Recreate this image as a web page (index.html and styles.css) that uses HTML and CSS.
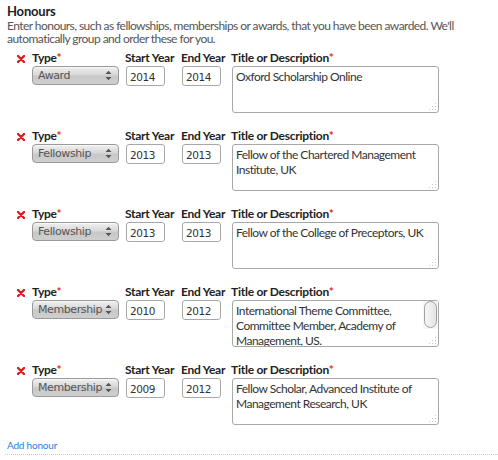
FILE: index.html
```html
<!DOCTYPE html>
<html>
<head>
<meta charset="utf-8">
<link rel="stylesheet" href="styles.css">
</head>
<body>
<div class="section">
  <h2 class="title">Honours</h2>
  <p class="intro">Enter honours, such as fellowships, memberships or awards, that you have been awarded. We'll automatically group and order these for you.</p>

  <div class="rows">
    <div class="row">
      <span class="remove"><svg width="8" height="8" viewBox="0 0 8 8"><path d="M1 1 L7 7 M7 1 L1 7" stroke="#e01b1b" stroke-width="2.4" stroke-linecap="round"/></svg></span>
      <div class="col col-type">
        <label class="lbl">Type<span class="req">*</span></label>
        <div class="select"><span class="sel-text">Award</span><svg class="arrows" width="7" height="11" viewBox="0 0 7 11"><path d="M0.5 4 L3.5 0.8 L6.5 4 Z M0.5 7 L3.5 10.2 L6.5 7 Z" fill="#555"/></svg></div>
      </div>
      <div class="col col-start">
        <label class="lbl">Start Year</label>
        <input class="year" type="text" value="2014">
      </div>
      <div class="col col-end">
        <label class="lbl">End Year</label>
        <input class="year" type="text" value="2014">
      </div>
      <div class="col col-title">
        <label class="lbl">Title or Description<span class="req">*</span></label>
        <div class="ta-wrap"><textarea class="desc">Oxford Scholarship Online</textarea><svg class="grip" width="9" height="9" viewBox="0 0 9 9"><g fill="#c8c8c8"><rect x="7" y="1" width="1" height="1"/><rect x="4" y="4" width="1" height="1"/><rect x="7" y="4" width="1" height="1"/><rect x="1" y="7" width="1" height="1"/><rect x="4" y="7" width="1" height="1"/><rect x="7" y="7" width="1" height="1"/></g></svg></div>
      </div>
    </div>

    <div class="row">
      <span class="remove"><svg width="8" height="8" viewBox="0 0 8 8"><path d="M1 1 L7 7 M7 1 L1 7" stroke="#e01b1b" stroke-width="2.4" stroke-linecap="round"/></svg></span>
      <div class="col col-type">
        <label class="lbl">Type<span class="req">*</span></label>
        <div class="select"><span class="sel-text">Fellowship</span><svg class="arrows" width="7" height="11" viewBox="0 0 7 11"><path d="M0.5 4 L3.5 0.8 L6.5 4 Z M0.5 7 L3.5 10.2 L6.5 7 Z" fill="#555"/></svg></div>
      </div>
      <div class="col col-start">
        <label class="lbl">Start Year</label>
        <input class="year" type="text" value="2013">
      </div>
      <div class="col col-end">
        <label class="lbl">End Year</label>
        <input class="year" type="text" value="2013">
      </div>
      <div class="col col-title">
        <label class="lbl">Title or Description<span class="req">*</span></label>
        <div class="ta-wrap"><textarea class="desc">Fellow of the Chartered Management Institute, UK</textarea><svg class="grip" width="9" height="9" viewBox="0 0 9 9"><g fill="#c8c8c8"><rect x="7" y="1" width="1" height="1"/><rect x="4" y="4" width="1" height="1"/><rect x="7" y="4" width="1" height="1"/><rect x="1" y="7" width="1" height="1"/><rect x="4" y="7" width="1" height="1"/><rect x="7" y="7" width="1" height="1"/></g></svg></div>
      </div>
    </div>

    <div class="row">
      <span class="remove"><svg width="8" height="8" viewBox="0 0 8 8"><path d="M1 1 L7 7 M7 1 L1 7" stroke="#e01b1b" stroke-width="2.4" stroke-linecap="round"/></svg></span>
      <div class="col col-type">
        <label class="lbl">Type<span class="req">*</span></label>
        <div class="select"><span class="sel-text">Fellowship</span><svg class="arrows" width="7" height="11" viewBox="0 0 7 11"><path d="M0.5 4 L3.5 0.8 L6.5 4 Z M0.5 7 L3.5 10.2 L6.5 7 Z" fill="#555"/></svg></div>
      </div>
      <div class="col col-start">
        <label class="lbl">Start Year</label>
        <input class="year" type="text" value="2013">
      </div>
      <div class="col col-end">
        <label class="lbl">End Year</label>
        <input class="year" type="text" value="2013">
      </div>
      <div class="col col-title">
        <label class="lbl">Title or Description<span class="req">*</span></label>
        <div class="ta-wrap"><textarea class="desc">Fellow of the College of Preceptors, UK</textarea><svg class="grip" width="9" height="9" viewBox="0 0 9 9"><g fill="#c8c8c8"><rect x="7" y="1" width="1" height="1"/><rect x="4" y="4" width="1" height="1"/><rect x="7" y="4" width="1" height="1"/><rect x="1" y="7" width="1" height="1"/><rect x="4" y="7" width="1" height="1"/><rect x="7" y="7" width="1" height="1"/></g></svg></div>
      </div>
    </div>

    <div class="row">
      <span class="remove"><svg width="8" height="8" viewBox="0 0 8 8"><path d="M1 1 L7 7 M7 1 L1 7" stroke="#e01b1b" stroke-width="2.4" stroke-linecap="round"/></svg></span>
      <div class="col col-type">
        <label class="lbl">Type<span class="req">*</span></label>
        <div class="select"><span class="sel-text">Membership</span><svg class="arrows" width="7" height="11" viewBox="0 0 7 11"><path d="M0.5 4 L3.5 0.8 L6.5 4 Z M0.5 7 L3.5 10.2 L6.5 7 Z" fill="#555"/></svg></div>
      </div>
      <div class="col col-start">
        <label class="lbl">Start Year</label>
        <input class="year" type="text" value="2010">
      </div>
      <div class="col col-end">
        <label class="lbl">End Year</label>
        <input class="year" type="text" value="2012">
      </div>
      <div class="col col-title">
        <label class="lbl">Title or Description<span class="req">*</span></label>
        <div class="ta-wrap"><textarea class="desc scroll">International Theme Committee, Committee Member, Academy of Management, US.</textarea><span class="track"></span><span class="thumb"></span><svg class="grip" width="9" height="9" viewBox="0 0 9 9"><g fill="#c8c8c8"><rect x="7" y="1" width="1" height="1"/><rect x="4" y="4" width="1" height="1"/><rect x="7" y="4" width="1" height="1"/><rect x="1" y="7" width="1" height="1"/><rect x="4" y="7" width="1" height="1"/><rect x="7" y="7" width="1" height="1"/></g></svg></div>
      </div>
    </div>

    <div class="row">
      <span class="remove"><svg width="8" height="8" viewBox="0 0 8 8"><path d="M1 1 L7 7 M7 1 L1 7" stroke="#e01b1b" stroke-width="2.4" stroke-linecap="round"/></svg></span>
      <div class="col col-type">
        <label class="lbl">Type<span class="req">*</span></label>
        <div class="select"><span class="sel-text">Membership</span><svg class="arrows" width="7" height="11" viewBox="0 0 7 11"><path d="M0.5 4 L3.5 0.8 L6.5 4 Z M0.5 7 L3.5 10.2 L6.5 7 Z" fill="#555"/></svg></div>
      </div>
      <div class="col col-start">
        <label class="lbl">Start Year</label>
        <input class="year" type="text" value="2009">
      </div>
      <div class="col col-end">
        <label class="lbl">End Year</label>
        <input class="year" type="text" value="2012">
      </div>
      <div class="col col-title">
        <label class="lbl">Title or Description<span class="req">*</span></label>
        <div class="ta-wrap"><textarea class="desc">Fellow Scholar, Advanced Institute of Management Research, UK</textarea><svg class="grip" width="9" height="9" viewBox="0 0 9 9"><g fill="#c8c8c8"><rect x="7" y="1" width="1" height="1"/><rect x="4" y="4" width="1" height="1"/><rect x="7" y="4" width="1" height="1"/><rect x="1" y="7" width="1" height="1"/><rect x="4" y="7" width="1" height="1"/><rect x="7" y="7" width="1" height="1"/></g></svg></div>
      </div>
    </div>
  </div>

  <div class="footer"><a class="add" href="#">Add honour</a></div>
</div>
</body>
</html>
```

FILE: styles.css
```css
html, body {
  margin: 0;
  padding: 0;
  background: #fff;
}
body {
  font-family: Lato, "Open Sans", sans-serif;
  color: #444;
}
.section {
  padding: 3px 0 0 7px;
}
.title {
  margin: 0;
  font-size: 13px;
  line-height: 16px;
  font-weight: bold;
  color: #222;
  letter-spacing: -0.2px;
}
.intro {
  margin: 0;
  font-size: 12px;
  line-height: 13px;
  color: #555;
  width: 470px;
  letter-spacing: -0.55px;
}
.rows {
  margin-top: 7px;
}
.row {
  display: flex;
  align-items: flex-start;
  height: 78px;
}
.remove {
  width: 25px;
  padding-left: 10px;
  box-sizing: border-box;
  padding-top: 3px;
  line-height: 0;
}
.col {
  display: flex;
  flex-direction: column;
  align-items: flex-start;
}
.col-type { width: 93px; }
.col-start { width: 56px; }
.col-end { width: 50px; }
.col-title { width: 220px; }
.lbl {
  font-size: 12px;
  line-height: 12px;
  font-weight: bold;
  color: #222;
  letter-spacing: -0.25px;
  white-space: nowrap;
  height: 12px;
}
.req {
  color: #e8232a;
}
.select {
  margin-top: 2px;
  width: 87px;
  height: 19px;
  flex: 0 0 19px;
  box-sizing: border-box;
  border: 1px solid #9a9a9a;
  border-radius: 4px;
  background: linear-gradient(#f0f0f0, #d8d8d8 45%, #c8c8c8 55%, #cfcfcf);
  display: flex;
  align-items: center;
  justify-content: space-between;
  padding: 0 6px 0 5px;
  box-shadow: inset 0 1px 0 rgba(255,255,255,0.6);
}
.sel-text {
  font-family: "DejaVu Sans", sans-serif;
  font-size: 11px;
  color: #555;
  letter-spacing: -0.4px;
}
.arrows {
  display: block;
}
.year {
  margin: 2px 0 0 1px;
  width: 39px;
  height: 20px;
  box-sizing: border-box;
  border: 1px solid #a8a8a8;
  border-radius: 3px;
  padding: 1px 3px 0 3px;
  font-family: "DejaVu Sans", sans-serif;
  font-size: 10.5px;
  color: #333;
  background: #fff;
  outline: none;
  letter-spacing: -0.4px;
}
.ta-wrap {
  position: relative;
  margin: 2px 0 0 1px;
  width: 207px;
  height: 47px;
}
.desc {
  display: block;
  width: 207px;
  height: 47px;
  box-sizing: border-box;
  margin: 0;
  border: 1px solid #a8a8a8;
  border-radius: 3px;
  padding: 2px 3px;
  font-family: Lato, "Open Sans", sans-serif;
  font-size: 12px;
  line-height: 15px;
  color: #333;
  letter-spacing: -0.5px;
  resize: none;
  overflow: hidden;
  outline: none;
  background: #fff;
}
.desc.scroll {
  padding-right: 17px;
}
.track {
  position: absolute;
  top: 1px;
  right: 1px;
  width: 15px;
  height: 28px;
  background: #f7f7f7;
}
.thumb {
  position: absolute;
  top: 1px;
  right: 2px;
  width: 13px;
  height: 27px;
  box-sizing: border-box;
  border: 1px solid #a0a0a0;
  border-radius: 7px;
  background: linear-gradient(90deg, #f6f6f6, #e4e4e4);
}
.grip {
  position: absolute;
  right: 2px;
  bottom: 2px;
  display: block;
}
.footer {
  margin-top: -3px;
  font-size: 10px;
  line-height: 12px;
  border-bottom: 1px dotted #c8c8c8;
  padding-bottom: 3px;
  margin-left: -2px;
  padding-left: 2px;
}
.add {
  font-size: 10px;
  line-height: 12px;
  color: #1f7fe0;
  text-decoration: none;
  letter-spacing: -0.2px;
}
```
